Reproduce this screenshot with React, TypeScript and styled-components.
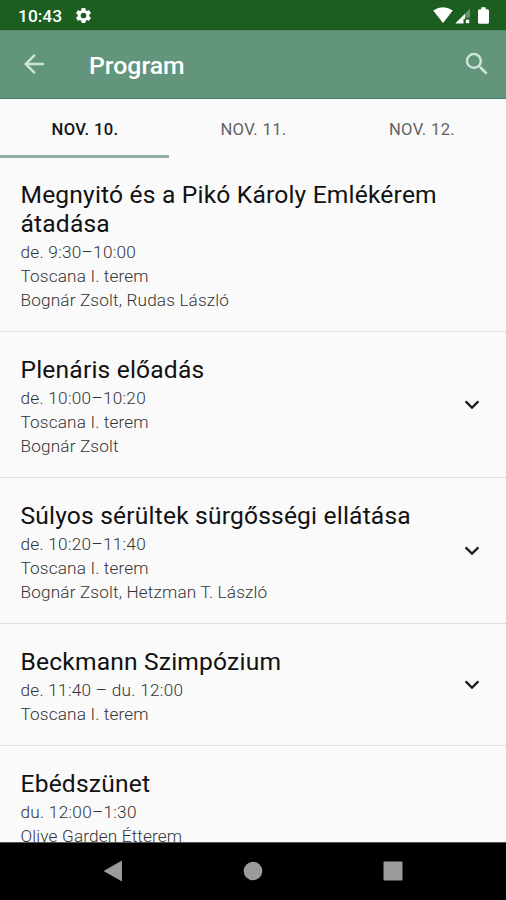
import React from 'react';
import styled, { createGlobalStyle } from 'styled-components';

const GlobalStyle = createGlobalStyle`
  * { box-sizing: border-box; }
  body { margin: 0; background: #fafafa; font-family: Roboto, "Liberation Sans", sans-serif; }
`;

const Screen = styled.div`
  width: 506px;
  height: 900px;
  display: flex;
  flex-direction: column;
  overflow: hidden;
  background: #fafafa;
`;

const StatusBar = styled.header`
  flex: none;
  height: 30px;
  display: flex;
  align-items: center;
  padding: 1px 14px 0 18px;
  background: #1b5e20;
  color: #fff;
`;

const Clock = styled.span`
  width: 56px;
  font-size: 17.4px;
  font-weight: 500;
  line-height: 20px;
`;

const StatusIcons = styled.div`
  margin-left: auto;
  display: flex;
  align-items: center;
`;

const AppBar = styled.div`
  flex: none;
  height: 69px;
  display: flex;
  align-items: center;
  padding: 0 14px 2px 19px;
  background: #63957d;
  border-top: 1px solid #568767;
  border-bottom: 1px solid #44836b;
`;

const AppTitle = styled.h1`
  flex: 1;
  margin: 4px 0 0 40px;
  color: #fff;
  font-size: 24.8px;
  font-weight: 500;
  line-height: 32px;
`;

const IconButton = styled.button`
  display: flex;
  padding: 0;
  border: 0;
  background: none;
  color: #cfe5d9;
`;

const Tabs = styled.nav`
  flex: none;
  height: 59px;
  display: grid;
  grid-template-columns: 169px 168px 169px;
`;

const Tab = styled.button<{ $active?: boolean }>`
  padding: 4px 0 0 1px;
  border: 0;
  border-bottom: 3px solid ${(p) => (p.$active ? '#8fafa2' : 'transparent')};
  background: none;
  color: ${(p) => (p.$active ? '#151515' : '#626262')};
  font-family: inherit;
  font-size: 16.6px;
  font-weight: ${(p) => (p.$active ? 500 : 450)};
  letter-spacing: 0.35px;
`;

const List = styled.main`
  flex: 1;
  min-height: 0;
  overflow: hidden;
`;

const Row = styled.article`
  display: flex;
  align-items: center;
  justify-content: space-between;
  padding: 23px 20px 19px 20.5px;
  border-bottom: 1px solid #dedede;

  &:first-child { padding-top: 22px; }
`;

const SessionTitle = styled.h2`
  margin: 0 0 2px;
  color: #111;
  font-size: 24.6px;
  font-weight: 430;
  line-height: 29px;
  letter-spacing: 0.18px;
`;

const Detail = styled.p`
  margin: 0;
  color: #333;
  font-size: 17.2px;
  font-weight: 320;
  line-height: 24px;
  letter-spacing: 0.15px;
  font-variant-numeric: tabular-nums;

  &:first-of-type { letter-spacing: 0.27px; }
`;

const Expander = styled.button`
  display: flex;
  margin: 0 0 6px;
  padding: 0;
  border: 0;
  background: none;
`;

const NavBar = styled.footer`
  flex: none;
  height: 58px;
  display: flex;
  align-items: center;
  justify-content: center;
  gap: 120px;
  padding-bottom: 2px;
  background: #000;
  border-top: 1px solid #555;
`;

const GearIcon = () => (
  <svg width="19" height="19" viewBox="0 0 24 24" fill="#fff">
    <path d="M19.14 12.94c.04-.3.06-.61.06-.94 0-.32-.02-.64-.07-.94l2.03-1.58a.49.49 0 0 0 .12-.61l-1.92-3.32a.488.488 0 0 0-.59-.22l-2.39.96c-.5-.38-1.03-.7-1.62-.94l-.36-2.54a.484.484 0 0 0-.48-.41h-3.84c-.24 0-.43.17-.47.41l-.36 2.54c-.59.24-1.13.57-1.62.94l-2.39-.96c-.22-.08-.47 0-.59.22L2.74 8.87c-.12.21-.08.47.12.61l2.03 1.58c-.05.3-.09.63-.09.94s.02.64.07.94l-2.03 1.58a.49.49 0 0 0-.12.61l1.92 3.32c.12.22.37.29.59.22l2.39-.96c.5.38 1.03.7 1.62.94l.36 2.54c.05.24.24.41.48.41h3.84c.24 0 .44-.17.47-.41l.36-2.54c.59-.24 1.13-.56 1.62-.94l2.39.96c.22.08.47 0 .59-.22l1.92-3.32c.12-.22.07-.47-.12-.61l-2.01-1.58zM12 15.6A3.6 3.6 0 1 1 12 8.4a3.6 3.6 0 0 1 0 7.2z" />
  </svg>
);

const SignalIcons = () => (
  <svg width="60" height="20" viewBox="0 0 60 20" fill="#fff">
    <path d="M1.2 4.5Q11 -2.1 20.8 4.5L11 17Z" />
    <path d="M23.2 17.5 33 7.8V13H31.5V17.5Z" />
    <path d="M33 7.8 38 2.8V11.5H33Z" opacity=".35" />
    <path d="M33.8 13.6h3.4v3.6h-3.4z" />
    <path d="M49.3 1.3h4.4v2h1.8a1.5 1.5 0 0 1 1.5 1.5v11.4a1.5 1.5 0 0 1-1.5 1.5h-8a1.5 1.5 0 0 1-1.5-1.5V4.8a1.5 1.5 0 0 1 1.5-1.5h1.8z" />
  </svg>
);

const BackIcon = () => (
  <svg width="30" height="30" viewBox="0 0 24 24" fill="currentColor">
    <path d="M20 11H7.83l5.59-5.59L12 4l-8 8 8 8 1.41-1.41L7.83 13H20v-2z" />
  </svg>
);

const SearchIcon = () => (
  <svg width="30" height="30" viewBox="0 0 24 24" fill="currentColor">
    <path d="M15.5 14h-.79l-.28-.27A6.471 6.471 0 0 0 16 9.5 6.5 6.5 0 1 0 9.5 16c1.61 0 3.09-.59 4.23-1.57l.27.28v.79l5 4.99L20.49 19l-4.99-5zm-6 0C7.01 14 5 11.99 5 9.5S7.01 5 9.5 5 14 7.01 14 9.5 11.99 14 9.5 14z" />
  </svg>
);

const ChevronIcon = () => (
  <svg width="28" height="28" viewBox="0 0 28 28" fill="none" stroke="#1c1c1c" strokeWidth="2.3">
    <path d="M7.6 11.4 14 17.6 20.4 11.4" />
  </svg>
);

type Session = { title: string; details: string[]; expandable?: boolean };

const sessions: Session[] = [
  { title: 'Megnyitó és a Pikó Károly Emlékérem átadása', details: ['de. 9:30–10:00', 'Toscana I. terem', 'Bognár Zsolt, Rudas László'] },
  { title: 'Plenáris előadás', details: ['de. 10:00–10:20', 'Toscana I. terem', 'Bognár Zsolt'], expandable: true },
  { title: 'Súlyos sérültek sürgősségi ellátása', details: ['de. 10:20–11:40', 'Toscana I. terem', 'Bognár Zsolt, Hetzman T. László'], expandable: true },
  { title: 'Beckmann Szimpózium', details: ['de. 11:40 – du. 12:00', 'Toscana I. terem'], expandable: true },
  { title: 'Ebédszünet', details: ['du. 12:00–1:30', 'Olive Garden Étterem'] },
];

export default function App() {
  return (
    <>
      <GlobalStyle />
      <Screen>
        <StatusBar>
          <Clock>10:43</Clock>
          <GearIcon />
          <StatusIcons><SignalIcons /></StatusIcons>
        </StatusBar>
        <AppBar>
          <IconButton aria-label="Vissza"><BackIcon /></IconButton>
          <AppTitle>Program</AppTitle>
          <IconButton aria-label="Keresés"><SearchIcon /></IconButton>
        </AppBar>
        <Tabs>
          <Tab $active>NOV. 10.</Tab>
          <Tab>NOV. 11.</Tab>
          <Tab>NOV. 12.</Tab>
        </Tabs>
        <List>
          {sessions.map((s) => (
            <Row key={s.title}>
              <div>
                <SessionTitle>{s.title}</SessionTitle>
                {s.details.map((d) => <Detail key={d}>{d}</Detail>)}
              </div>
              {s.expandable && <Expander aria-label="Részletek"><ChevronIcon /></Expander>}
            </Row>
          ))}
        </List>
        <NavBar>
          <svg width="20" height="22" viewBox="0 0 20 22" fill="#9b9b9b"><path d="M0.5 11 19 .6V21.4Z" /></svg>
          <svg width="20" height="20" viewBox="0 0 20 20" fill="#9b9b9b"><circle cx="10" cy="10" r="9.3" /></svg>
          <svg width="20" height="20" viewBox="0 0 20 20" fill="#9b9b9b"><rect x=".5" y=".5" width="19" height="19" rx="1" /></svg>
        </NavBar>
      </Screen>
    </>
  );
}
